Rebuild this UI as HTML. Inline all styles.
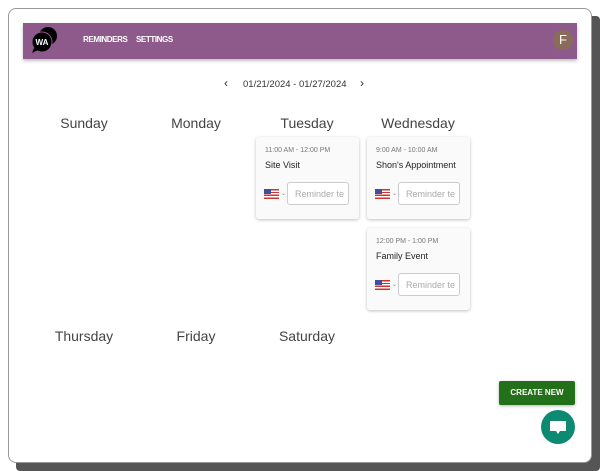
<!DOCTYPE html>
<html><head><meta charset="utf-8"><style>
*{margin:0;padding:0;box-sizing:border-box}
body{width:600px;height:471px;background:#fff;position:relative;overflow:hidden;font-family:"Liberation Sans",Arial,sans-serif;color:#222}
.shadow{position:absolute;left:16px;top:16px;width:584px;height:455px;background:#555;border-radius:4px}
.box{position:absolute;left:8px;top:8px;width:584px;height:455px;background:#fff;border:1px solid #999;border-radius:8px}
.hdr{position:absolute;left:23px;top:23px;width:554px;height:36px;background:#8d5a8b;box-shadow:0 2px 3px rgba(0,0,0,.25)}
.nav{position:absolute;top:35px;color:#fff;font-size:8px;font-weight:bold;letter-spacing:-.4px;white-space:nowrap}
.av{position:absolute;left:553px;top:30px;width:20px;height:20px;border-radius:50%;background:#8a6c5a;color:#fff;font-size:13px;text-align:center;line-height:20px}
.day{position:absolute;font-size:14px;color:#444;width:100px;text-align:center}
.card{position:absolute;width:103px;height:82px;background:#fafafa;border-radius:3px;box-shadow:0 1px 3px rgba(0,0,0,.25)}
.t{position:absolute;left:9px;top:10px;font-size:7px;color:#777}
.n{position:absolute;left:9px;top:23px;font-size:9px;color:#222}
.flag{position:absolute;left:8px;top:52px;width:15px;height:10px;background:repeating-linear-gradient(#c33 0 1.4px,#fff 1.4px 2.8px)}
.flag:before{content:"";position:absolute;left:0;top:0;width:7px;height:5px;background:#3c4fa0}
.car{position:absolute;left:25px;top:53px;font-size:6px;color:#888}
.inp{position:absolute;left:31px;top:45px;width:62px;height:23px;border:1px solid #ccc;border-radius:3px;background:#fff;font-size:9px;color:#aaa;padding:6px 0 0 7px;white-space:nowrap;overflow:hidden}
.btn{position:absolute;left:499px;top:381px;width:76px;height:24px;background:#23701a;border-radius:2px;color:#fff;font-size:8px;font-weight:bold;text-align:center;line-height:24px;box-shadow:0 1px 3px rgba(0,0,0,.3)}
.fab{position:absolute;left:541px;top:410px;width:34px;height:34px;border-radius:50%;background:#0f8a72}
</style></head><body>
<div class="shadow"></div><div class="box"></div>
<div class="hdr"></div>
<svg style="position:absolute;left:29px;top:26px" width="32" height="30" viewBox="0 0 32 30">
<circle cx="19" cy="10" r="9" fill="#000"/><circle cx="13" cy="16" r="10" fill="#000" stroke="#8d5a8b" stroke-width="1"/>
<path d="M5 22 L3 27 L9 24Z" fill="#000"/>
<text x="13" y="19" font-size="8" font-weight="bold" fill="#fff" text-anchor="middle" font-family="Liberation Sans">WA</text></svg>
<div class="nav" style="left:83px">REMINDERS</div>
<div class="nav" style="left:136px">SETTINGS</div>
<div class="av">F</div>
<div style="position:absolute;left:224px;top:76px;font-size:12px;color:#333">‹</div>
<div style="position:absolute;left:243px;top:79px;font-size:9.5px;color:#333">01/21/2024 - 01/27/2024</div>
<div style="position:absolute;left:360px;top:76px;font-size:12px;color:#333">›</div>
<div class="day" style="left:34px;top:115px">Sunday</div>
<div class="day" style="left:146px;top:115px">Monday</div>
<div class="day" style="left:257px;top:115px">Tuesday</div>
<div class="day" style="left:368px;top:115px">Wednesday</div>
<div class="day" style="left:34px;top:328px">Thursday</div>
<div class="day" style="left:146px;top:328px">Friday</div>
<div class="day" style="left:257px;top:328px">Saturday</div>
<div class="card" style="left:256px;top:137px"><div class="t">11:00 AM - 12:00 PM</div><div class="n">Site Visit</div><div class="flag"></div><div class="car">⌄</div><div class="inp">Reminder te</div></div>
<div class="card" style="left:367px;top:137px"><div class="t">9:00 AM - 10:00 AM</div><div class="n">Shon's Appointment</div><div class="flag"></div><div class="car">⌄</div><div class="inp">Reminder te</div></div>
<div class="card" style="left:367px;top:228px"><div class="t">12:00 PM - 1:00 PM</div><div class="n">Family Event</div><div class="flag"></div><div class="car">⌄</div><div class="inp">Reminder te</div></div>
<div class="btn">CREATE NEW</div>
<div class="fab"><svg width="34" height="34" viewBox="0 0 34 34"><path d="M9 11 H25 V21 H19 L17 24 L15 21 H9Z" fill="#fff"/></svg></div>
</body></html>
